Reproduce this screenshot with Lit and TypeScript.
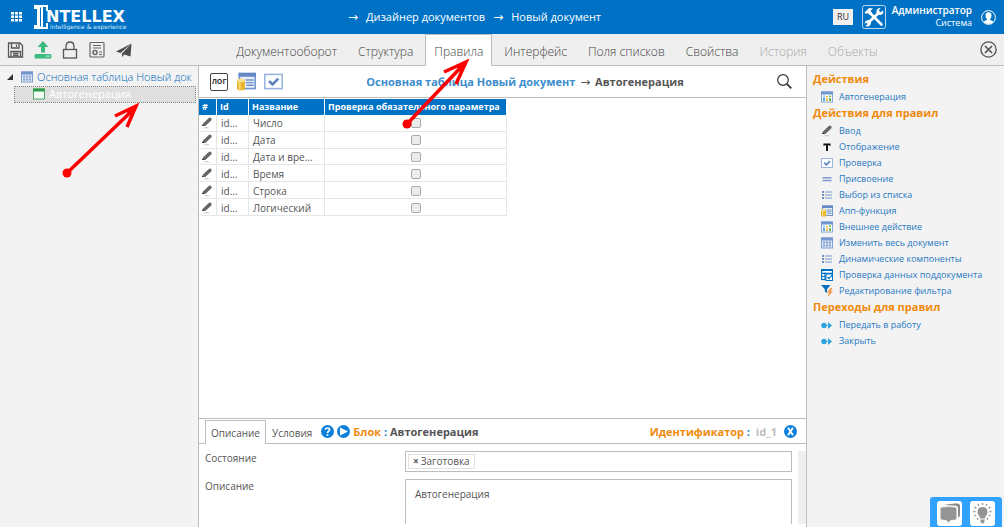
import { LitElement, html, css, svg, nothing } from "lit";
import { customElement, property, state } from "lit/decorators.js";
import { classMap } from "lit/directives/class-map.js";

const tableGlyph = svg`
  <rect x="0.5" y="0.5" width="11" height="10" fill="#dfe8f6" stroke="#7f9fd0"/>
  <rect x="0" y="0" width="12" height="3" fill="#7496cc"/>
  <rect x="2" y="4" width="8" height="5" fill="#8aa5d2"/>
  <path d="M2 6.5h8M4.5 4v5M7.5 4v5" stroke="#fff" stroke-width=".6"/>`;

const listGlyph = svg`
  <path d="M1 2.5h2M1 5.5h2M1 8.5h2" stroke="#4a6fb5" stroke-width="1.4"/>
  <path d="M4 2.5h7M4 5.5h7M4 8.5h7" stroke="#7a98cc" stroke-width="1.2"/>`;

const chartGlyph = svg`
  <rect x="0.5" y="0.5" width="11" height="10" fill="#fff" stroke="#86a6d6"/>
  <rect x="0" y="0" width="12" height="3" fill="#6f96d0"/>
  <path d="M3 9.500V6M3 5V4" stroke="#5aa9e8" stroke-width="2"/>
  <path d="M6 9.500V7M6 6V4.500" stroke="#f0b848" stroke-width="2"/>
  <path d="M9 9.500V6.500M9 5.500V4" stroke="#63b85c" stroke-width="2"/>`;

const dbGlyph = svg`
  <rect x="1.500" y="0.500" width="10" height="9.500" fill="#e6edf8" stroke="#7697cc"/>
  <rect x="1" y="0" width="11" height="2.500" fill="#6289c6"/>
  <path d="M5.500 4.500h5M5.500 6.200h5M6 7.900h4.500" stroke="#6f92cb" stroke-width=".9"/>
  <rect x="0" y="4" width="5" height="7" rx="1.200" fill="#e9b52c"/>
  <rect x="1" y="5" width="1.300" height="5.500" fill="#f7d878"/>
  <ellipse cx="2.500" cy="4.800" rx="2.500" ry="1.100" fill="#f8df8c"/>`;

const pencilGlyph = svg`
  <path d="M1 8.600 2 6 7.800.4Q9.300-.5 10.300.7q.9 1-.1 2.300L4.300 8.400Z" fill="#666"/>
  <path d="M1 8.600 1.600 7.200 3 8.500Z" fill="#222"/>
  <path d="M1 10.700h8.500L6 9.500Z" fill="#c4c4c4"/>`;

const checkGlyph = svg`
  <rect x="0.500" y="1" width="11" height="9" fill="#fdfeff" stroke="#9db5dc"/>
  <path d="M3.200 5.200 5.400 7.300 9 3.700" fill="none" stroke="#5f84bd" stroke-width="1.700"/>`;

const glyphs: Record<string, unknown> = {
  table: tableGlyph,
  list: listGlyph,
  chart: chartGlyph,
  db: dbGlyph,
  pencil: pencilGlyph,
  check: checkGlyph,
  letter: svg`<path d="M2.500 2h7v2.600H8.800L8.400 3.700H7V9.500H5V3.700H3.600L3.200 4.600H2.500Z" fill="#111"/>`,
  equals: svg`<path d="M1.500 4.200h9M1.500 7h9" stroke="#7f9bd0" stroke-width="1.400"/>`,
  verify: svg`
    <rect x="0.600" y="0" width="10.800" height="10" fill="#fff" stroke="#0072c6" stroke-width="1.200"/>
    <path d="M0 1h12M0 3.800h12M4 3v7.500M0 7h6" stroke="#0072c6" stroke-width="1.200"/>
    <rect x="5" y="4.500" width="6.500" height="6.500" fill="#fff" stroke="#0072c6"/>
    <path d="M6.500 7.500 8 9.200l3-3.500" fill="none" stroke="#0072c6" stroke-width="1.200"/>`,
  filter: svg`
    <path d="M0-.5h9.500L6 3.700V7.500L3.800 6V3.700Z" fill="#0b6fc0"/>
    <path d="M9.500 2.500 5.800 7h2.200L6.500 11.500 12 6H9.600L11.500 2.500Z" fill="#f59a4a"/>`,
  forward: svg`
    <circle cx="3" cy="6" r="2.700" fill="#2ca3e0"/>
    <path d="M5 6h3M7.500 3.200 10.600 6 7.500 8.800Z" fill="#2ca3e0" stroke="#2ca3e0" stroke-width=".8"/>`,
  form: svg`
    <rect x="0.500" y="0.500" width="11" height="10" fill="#f2fbf4" stroke="#55ab6a"/>
    <rect x="0" y="0" width="12" height="3" fill="#2f9e4c"/>`,
};

const icon = (name: string) =>
  svg`<svg viewBox="0 -0.5 12 12" aria-hidden="true">${glyphs[name]}</svg>`;

interface Group {
  title: string;
  links: [string, string][];
}

const groups: Group[] = [
  { title: "Действия", links: [["chart", "Автогенерация"]] },
  {
    title: "Действия для правил",
    links: [
      ["pencil", "Ввод"],
      ["letter", "Отображение"],
      ["check", "Проверка"],
      ["equals", "Присвоение"],
      ["list", "Выбор из списка"],
      ["db", "Апп-функция"],
      ["chart", "Внешнее действие"],
      ["table", "Изменить весь документ"],
      ["list", "Динамические компоненты"],
      ["verify", "Проверка данных поддокумента"],
      ["filter", "Редактирование фильтра"],
    ],
  },
  {
    title: "Переходы для правил",
    links: [
      ["forward", "Передать в работу"],
      ["forward", "Закрыть"],
    ],
  },
];

const reset = css`
  * { box-sizing: border-box; }
  button {
    font: inherit;
    color: inherit;
    background: none;
    border: 0;
    padding: 0;
    margin: 0;
    display: block;
    cursor: pointer;
  }
  a { color: inherit; text-decoration: none; }
  svg { display: block; }
`;

@customElement("top-bar")
class TopBar extends LitElement {
  static styles = [reset, css`
    :host {
      display: flex;
      align-items: center;
      height: 34px;
      background: #0072c6;
      color: #fff;
    }
    .apps { margin: 0 11px; }
    .crumbs {
      flex: 1;
      display: flex;
      justify-content: center;
      gap: 8px;
      padding-right: 11px;
      font-size: 11px;
      line-height: 16px;
    }
    .arrow { font-size: 12px; }
    .lang {
      width: 20px;
      height: 16px;
      background: #f0f0f0;
      color: #333;
      font-size: 9px;
      line-height: 16px;
      margin-right: 9px;
    }
    .user {
      width: 86px;
      text-align: right;
      font-size: 9px;
      line-height: 13px;
      margin-right: 9px;
      padding-bottom: 2px;
    }
    .name { font-weight: 600; font-size: 10px; line-height: 12px; }
    .avatar { margin-right: 8px; }
  `];

  render() {
    return html`
      <button class="apps" aria-label="Меню">
        <svg width="11" height="10" viewBox="0 0 11 10" fill="#fff">
          ${[0, 4, 8].map((x) => [0, 3.5, 7].map((y) => svg`<rect x=${x} y=${y} width="3" height="2.500"/>`))}
        </svg>
      </button>
      <svg class="logo" width="94" height="26" viewBox="0 0 94 26" role="img" aria-label="Intellex">
        <path d="M1 1h14v6h-2V3h-3v20h3v-4h2v6H1v-4h3V5H1Z" fill="#fff"/>
        <path d="M7.500 3.500v19" stroke="#0072c6"/>
        <text x="13" y="18" fill="#fff" font-family="DejaVu Sans, sans-serif" font-weight="700" font-size="16">NTELLEX</text>
        <text x="17" y="25" fill="#d8eaf8" font-family="DejaVu Sans, sans-serif" font-size="6">intelligence &amp; experience</text>
      </svg>
      <nav class="crumbs">
        <span class="arrow">→</span><a href="#designer">Дизайнер документов</a>
        <span class="arrow">→</span><a href="#document">Новый документ</a>
      </nav>
      <button class="lang">RU</button>
      <svg width="24" height="24" viewBox="0 0 24 24">
        <rect x="0.500" y="0.500" width="23" height="23" rx="2" fill="none" stroke="#b9d8f0"/>
        <path d="M8 8 19.500 19.500" stroke="#fff" stroke-width="2.600" stroke-linecap="round"/>
        <path d="M2.500 7.500 7 3l4 .5L8.500 6l1.500 2-2.300 2-2-2-1.500 1Z" fill="#fff"/>
        <path d="M6 18 17 7.500" stroke="#fff" stroke-width="2.800"/>
        <path d="M18.500 3 16.800 5.500l1.700 1.700L21.200 5.500q.6 3-1.700 4.200-2.500.8-4.200-1t-.5-4Q16.200 2.500 18.500 3Z" fill="#fff"/>
        <path d="M6 15q2.500 0 3 2.500 0 3-3 4-1.500.2-2.500-.5l2.200-2-1.200-1.300-1.800 1Q2.800 15.500 6 15Z" fill="#fff"/>
      </svg>
      <div class="user"><div class="name">Администратор</div><div>Система</div></div>
      <svg class="avatar" width="15" height="15" viewBox="0 0 15 15">
        <circle cx="7.500" cy="7.500" r="6.900" fill="none" stroke="#fff"/>
        <path d="M7.500 2.200q3 0 3 3.200 0 2.200-1.300 3.500v1q3 .9 3.300 2.100Q10.500 14 7.500 14T2.500 12q.3-1.200 3.300-2.100v-1Q4.500 7.600 4.500 5.400q0-3.200 3-3.200Z" fill="#fff"/>
      </svg>
    `;
  }
}

@customElement("tool-bar")
class ToolBar extends LitElement {
  @state() active = "Правила";

  private tabs = ["Документооборот", "Структура", "Правила", "Интерфейс", "Поля списков", "Свойства", "История", "Объекты"];
  private off = ["История", "Объекты"];

  static styles = [reset, css`
    :host {
      display: flex;
      align-items: stretch;
      height: 32px;
      background: #efefef;
      border-bottom: 1px solid #bdbdbd;
      color: #444;
    }
    .tools { display: flex; align-items: center; gap: 9px; padding-left: 7px; }
    .tabs {
      flex: 1;
      display: flex;
      justify-content: center;
      gap: 3px;
      padding-left: 8px;
      margin-bottom: -1px;
    }
    .tab {
      padding: 1px 8px 0;
      font-size: 12px;
      font-weight: 300;
      border: 1px solid transparent;
      border-bottom: 0;
    }
    .tab.active { background: #fff; border-color: #bdbdbd; }
    .tab:disabled { color: #a8a8a8; }
    .close { padding: 0 7px; }
  `];

  render() {
    return html`
      <div class="tools">
        <button aria-label="Сохранить"><svg width="18" height="18" viewBox="0 0 18 18" fill="none" stroke="#555" stroke-width="1.300">
          <path d="M1.500 2h11.500l2.500 2.500v11.500h-14Z"/><path d="M4.500 2v5h7.500v-5M9.500 3.500v2.200M4 16v-5.500h9.500v5.500M6 12.500h5.500M6 14.500h5.500"/></svg></button>
        <button aria-label="Опубликовать"><svg width="18" height="18" viewBox="0 0 18 18" fill="#3dba7e">
          <path d="M9 0 14.500 6H11v5.500H7V6H3.500Z"/><rect x="0.500" y="13" width="17" height="4.500" rx="1.500"/><path d="M12 15.200h1.300M14.500 15.200h1.300" stroke="#fff" stroke-width="1.300"/></svg></button>
        <button aria-label="Заблокировать"><svg width="18" height="18" viewBox="0 0 18 18" fill="none" stroke="#555" stroke-width="1.300">
          <rect x="2.500" y="8.500" width="13" height="8.500"/><path d="M5 8.500V5.500q0-4.500 4-4.500t4 4.500v3"/></svg></button>
        <button aria-label="Сертификат"><svg width="18" height="18" viewBox="0 0 18 18" fill="none" stroke="#666" stroke-width="1.200">
          <rect x="2" y="1.500" width="14" height="14.500" rx="1"/><path d="M5 4.500h8M5 7h8M11 11h3M11 13.500h3"/><circle cx="7" cy="11.500" r="2" stroke-width="1.500"/></svg></button>
        <button aria-label="Отправить"><svg width="18" height="18" viewBox="0 0 18 18">
          <path d="M16.500 2.500 1 10.500l4.500 1.500ZM16.500 2.500 7 12.500V16l2.300-2.500 6.200 2Z" fill="#4d4d4d"/></svg></button>
      </div>
      <nav class="tabs" role="tablist">
        ${this.tabs.map((t) => html`<button role="tab" class=${classMap({ tab: true, active: t === this.active })}
          aria-selected=${t === this.active} ?disabled=${this.off.includes(t)}
          @click=${() => (this.active = t)}>${t}</button>`)}
      </nav>
      <button class="close" aria-label="Закрыть"><svg width="17" height="17" viewBox="0 0 17 17" fill="none" stroke="#555" stroke-width="1.400">
        <circle cx="8.500" cy="8.500" r="7.600"/><path d="M5 5l7 7M12 5l-7 7" stroke-width="1.700"/></svg></button>
    `;
  }
}

@customElement("doc-tree")
class DocTree extends LitElement {
  static styles = [reset, css`
    :host {
      display: block;
      padding: 3px 2px 0 7px;
      border-right: 1px solid #bdbdbd;
      background: #f3f3f3;
      overflow: hidden;
      font-size: 11px;
      line-height: 14px;
      white-space: nowrap;
    }
    .node { display: flex; align-items: center; height: 17px; padding-bottom: 1px; color: #0068b8; font-weight: 300; }
    .node svg { flex: none; width: 12px; height: 12px; }
    .label { margin-left: 4px; }
    .node .twist { width: 6px; height: 6px; margin-right: 8px; }
    .child {
      margin-left: 7px;
      padding-left: 18px;
      border: 1px dotted #888;
      background: #dfdfdf;
      color: #fff;
      font-weight: 400;
    }
  `];

  render() {
    return html`
      <div class="node">
        <svg class="twist" viewBox="0 0 6 6"><path d="M6 0v6H0Z" fill="#333"/></svg>
        ${icon("table")}<span class="label">Основная таблица Новый док</span>
      </div>
      <div class="node child">${icon("form")}<span class="label">Автогенерация</span></div>
    `;
  }
}

@customElement("rules-table")
class RulesTable extends LitElement {
  @property({ attribute: false }) rows = ["Число", "Дата", "Дата и вре...", "Время", "Строка", "Логический"];

  static styles = [reset, css`
    :host { display: block; padding-top: 1px; }
    table {
      border-collapse: separate;
      border-spacing: 0;
      table-layout: fixed;
      width: 308px;
      height: 117px;
      font-size: 10px;
      line-height: 14px;
      color: #555;
    }
    th {
      height: 16px;
      padding: 0 3px;
      background: #0072c6;
      color: #fff;
      text-align: left;
      font-size: 9px;
      font-weight: 700;
      white-space: nowrap;
      border-right: 1px solid #fff;
    }
    td { padding: 1px 4px 0; border-right: 1px solid #e6e6e6; border-bottom: 1px solid #e6e6e6; white-space: nowrap; }
    .edit { width: 18px; }
    .id { width: 32px; }
    .title { width: 76px; }
    td.edit { padding: 1px 2px 0; }
    td.flag { text-align: center; line-height: 0; }
    input {
      appearance: none;
      width: 10px;
      height: 10px;
      margin: 0;
      border: 1px solid #aaa;
      border-radius: 2px;
      background: #ececec;
    }
    td svg { width: 12px; height: 12px; }
  `];

  render() {
    return html`
      <table>
        <thead><tr><th class="edit">#</th><th class="id">Id</th><th class="title">Название</th><th>Проверка обязательного параметра</th></tr></thead>
        <tbody>
          ${this.rows.map((r) => html`<tr>
            <td class="edit"><button aria-label="Изменить">${icon("pencil")}</button></td>
            <td>id...</td><td>${r}</td>
            <td class="flag"><input type="checkbox" aria-label=${r}></td>
          </tr>`)}
        </tbody>
      </table>
    `;
  }
}

@customElement("block-editor")
class BlockEditor extends LitElement {
  static styles = [reset, css`
    :host {
      display: flex;
      flex-direction: column;
      height: 109px;
      border-top: 1px solid #bdbdbd;
      color: #555;
      font-size: 10px;
      line-height: 14px;
    }
    .strip {
      display: flex;
      height: 25px;
      flex: none;
      align-items: center;
      padding: 1px 9px 0 6px;
      border-bottom: 1px solid #bdbdbd;
    }
    .tab { height: 24px; padding: 0 5px; margin-bottom: -1px; border: 1px solid transparent; border-bottom: 0; }
    .tab.active { background: #fff; border-color: #bdbdbd; }
    .title { flex: 1; margin: 0 0 0 3px; font-size: 11px; line-height: 16px; font-weight: 700; }
    .round { margin-left: 3px; }
    .key { color: #f08a0c; }
    .colon { color: #0a82e0; }
    .ident { font-size: 11px; line-height: 16px; font-weight: 700; margin-right: 7px; }
    .value { color: #bdbdbd; margin-left: 3px; }
    .body { flex: 1; display: flex; min-height: 0; padding: 7px 0 3px 6px; overflow: hidden; }
    .form {
      flex: 1;
      display: grid;
      grid-template-columns: 200px 1fr;
      grid-template-rows: 21px 60px;
      row-gap: 7px;
      overflow: hidden;
    }
    .box {
      border: 1px solid #bdbdbd;
      padding: 2px;
      min-width: 0;
      display: flex;
    }
    .chip { display: flex; gap: 2px; height: 15px; line-height: 13px; padding: 0 4px; border: 1px solid #e2e2e2; }
    textarea {
      font: inherit;
      color: inherit;
      border: 1px solid #bdbdbd;
      border-radius: 0;
      padding: 7px 9px;
      margin: 0;
      resize: none;
      overflow: hidden;
    }
    .scroll { width: 8px; margin-left: 6px; background: #efefef; }
  `];

  render() {
    return html`
      <div class="strip">
        <button class="tab active">Описание</button>
        <button class="tab">Условия</button>
        <button class="round" aria-label="Справка"><svg width="13" height="13" viewBox="0 0 13 13">
          <circle cx="6.500" cy="6.500" r="6.500" fill="#0a7fdc"/>
          <path d="M4.300 4.700q.2-1.700 2.200-1.700t2.100 1.600q0 1-1 1.600T6.500 8" fill="none" stroke="#fff" stroke-width="1.700"/><circle cx="6.500" cy="9.900" r="1" fill="#fff"/></svg></button>
        <button class="round" aria-label="Запустить"><svg width="13" height="13" viewBox="0 0 13 13">
          <circle cx="6.500" cy="6.500" r="6.500" fill="#0a7fdc"/><path d="M3 2.500 11 6.500l-8 4Z" fill="#fff"/></svg></button>
        <h2 class="title"><span class="key">Блок</span> <span class="colon">:</span> Автогенерация</h2>
        <div class="ident"><span class="key">Идентификатор</span> <span class="colon">:</span> <span class="value">id_1</span></div>
        <button aria-label="Закрыть"><svg width="13" height="13" viewBox="0 0 13 13">
          <circle cx="6.500" cy="6.500" r="6.500" fill="#0a7fdc"/><path d="M4 2.800l5 7.400M9 2.800 4 10.200" stroke="#fff" stroke-width="1.900"/></svg></button>
      </div>
      <div class="body">
        <div class="form">
          <span>Состояние</span>
          <div class="box"><button class="chip"><b>×</b><span>Заготовка</span></button></div>
          <label for="desc">Описание</label>
          <textarea id="desc" .value=${"Автогенерация"}></textarea>
        </div>
        <div class="scroll"></div>
      </div>
    `;
  }
}

@customElement("action-list")
class ActionList extends LitElement {
  static styles = [reset, css`
    :host { display: block; padding: 5px 0 0 6px; background: #f3f3f3; border-left: 1px solid #bdbdbd; }
    h3 { margin: 0; padding-bottom: 2px; font-size: 11px; line-height: 16px; font-weight: 700; color: #f08a0c; }
    a {
      display: flex;
      align-items: center;
      gap: 6px;
      height: 16px;
      padding-left: 8px;
      font-size: 9px;
      line-height: 14px;
      color: #2779c2;
      white-space: nowrap;
    }
    a svg { width: 12px; height: 12px; }
  `];

  render() {
    return groups.map((g) => html`
      <h3>${g.title}</h3>
      ${g.links.map(([i, t]) => html`<a href="#">${icon(i)}<span>${t}</span></a>`)}
    `);
  }
}

@customElement("app-root")
class AppRoot extends LitElement {
  @property({ type: Boolean }) hints = true;

  static styles = [reset, css`
    :host {
      display: flex;
      flex-direction: column;
      height: 100vh;
      position: relative;
      overflow: hidden;
      background: #fff;
      font-family: "Open Sans", "Noto Sans", "DejaVu Sans", sans-serif;
    }
    .main { flex: 1; display: grid; grid-template-columns: 199px 1fr 198px; min-height: 0; }
    .center { display: flex; flex-direction: column; min-width: 0; }
    .head {
      display: flex;
      align-items: center;
      height: 32px;
      padding: 0 13px 0 11px;
      border-bottom: 1px solid #bdbdbd;
    }
    .log {
      width: 18px;
      height: 18px;
      border: 1px solid #444;
      border-radius: 2px;
      font-size: 7px;
      line-height: 14px;
      font-weight: 700;
      color: #333;
      text-align: center;
      margin-right: 9px;
    }
    .head svg { width: 19px; height: 19px; }
    .gap { margin-right: 8px; }
    .path { flex: 1; padding-right: 7px; margin: 0; text-align: center; font-size: 11px; line-height: 16px; font-weight: 700; color: #555; }
    .path a { color: #3d8ccc; }
    .thin { font-weight: 400; font-size: 12px; margin: 0 2px; }
    .grow { flex: 1; }
    .dock {
      position: absolute;
      right: 2px;
      bottom: 0;
      display: flex;
      gap: 8px;
      padding: 4px 7px 1px;
      background: #2fa3ff;
      border-radius: 3px 3px 0 0;
    }
    .dock button { background: #fff; border-radius: 3px; }
    .hints { position: absolute; top: 0; left: 0; pointer-events: none; }
  `];

  render() {
    return html`
      <top-bar></top-bar>
      <tool-bar></tool-bar>
      <div class="main">
        <doc-tree></doc-tree>
        <div class="center">
          <div class="head">
            <button class="log">ЛОГ</button>
            <button class="gap" aria-label="Данные">${icon("db")}</button>
            <button aria-label="Проверка">${icon("check")}</button>
            <h1 class="path"><a href="#table">Основная таблица Новый документ</a> <span class="thin">→</span> Автогенерация</h1>
            <button aria-label="Поиск"><svg viewBox="0 0 19 19" fill="none" stroke="#333" stroke-width="1.200">
              <circle cx="9" cy="8" r="5.300"/><path d="M12.800 11.800l4.500 4.500" stroke-width="1.800"/></svg></button>
          </div>
          <rules-table></rules-table>
          <div class="grow"></div>
          <block-editor></block-editor>
        </div>
        <action-list></action-list>
      </div>
      <div class="dock">
        <button aria-label="Чат"><svg width="25" height="25" viewBox="0 0 25 25">
          <path d="M7 4q7-2 14-1.500 2 .3 2 2.500v9q0 2-2 2.500V7q0-2-2-2.200Q12 4 7 4Z" fill="#8a8a8a"/>
          <path d="M5 6q7-.8 13 0 1.800.3 1.800 2v9q0 1.800-1.800 2l-4.500.5-2 2.500-2-2.500L5 19q-1.800-.2-1.800-2V8Q3.200 6.200 5 6Z" fill="#949494" stroke="#fff" stroke-width=".6"/></svg></button>
        <button aria-label="Подсказки"><svg width="25" height="25" viewBox="0 0 25 25">
          <path d="M12.500 6q5 .2 5 5 0 2-1.500 3.800-1 1.200-1.200 2.700h-4.600Q10 16 9 14.800 7.500 13 7.500 11q0-4.800 5-5Z" fill="#949494"/>
          <path d="M10.500 18.500h4v2.500l-1.500 1.500h-1L10.500 21Z" fill="#949494"/>
          <path d="M12.500 2v2M8 3l1 1.700M17 3l-1 1.700M4.500 6l1.800 1.200M20.500 6l-1.800 1.200M3.500 10.500h2M19.500 10.500h2M4.500 15l1.800-1M20.500 15l-1.800-1M7 18.500l1.200-1.500M18 18.500 16.800 17" stroke="#949494" stroke-width="1.400"/></svg></button>
      </div>
      ${this.hints ? html`<svg class="hints" width="500" height="190" viewBox="0 0 500 190" fill="none" stroke="#f00" stroke-width="3.500" aria-hidden="true">
        <path d="M67 173 135 108M115 116 136 106 127 127M407 124 465 63M444 72 466 62 456 84"/>
        <path d="M138 105l-12 6 6 5ZM468 60l-12 6 6 5Z" fill="#f00" stroke-width="1"/>
        <circle cx="67" cy="173" r="4.500" fill="#f00" stroke="none"/>
        <circle cx="407" cy="124" r="4.500" fill="#f00" stroke="none"/>
      </svg>` : nothing}
    `;
  }
}
